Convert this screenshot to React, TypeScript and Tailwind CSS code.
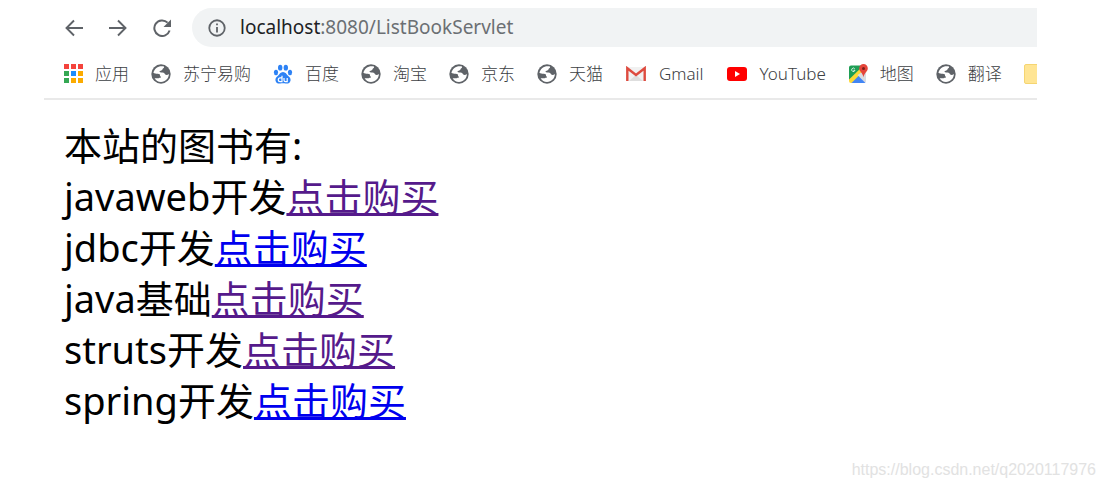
import { useState, type ReactNode } from "react";

interface Bookmark {
  label: string;
  icon: ReactNode;
}

interface Book {
  name: string;
  visited: boolean;
}

function BackIcon() {
  return (
    <svg viewBox="0 0 18 18" className="size-[18px]" fill="none" stroke="#5f6368" strokeWidth="1.9">
      <path d="M18 9H2M9 1.5 1.5 9 9 16.5" />
    </svg>
  );
}

function ForwardIcon() {
  return (
    <svg viewBox="0 0 18 18" className="size-[18px]" fill="none" stroke="#5f6368" strokeWidth="1.9">
      <path d="M0 9h16M9 1.5 16.5 9 9 16.5" />
    </svg>
  );
}

function ReloadIcon() {
  return (
    <svg viewBox="0 0 18 18" className="size-[18px]">
      <path d="M16.6 11.5A7.8 7.8 0 1 1 14.6 3.6" fill="none" stroke="#5f6368" strokeWidth="2" />
      <path d="M18 .5v7.500h-7.500z" fill="#5f6368" />
    </svg>
  );
}

function InfoIcon() {
  return (
    <svg viewBox="0 0 20 20" className="size-[18px] shrink-0">
      <circle cx="10" cy="10" r="8.6" fill="none" stroke="#5f6368" strokeWidth="2" />
      <path d="M9 9h2v6H9zM9 5h2v2H9z" fill="#5f6368" />
    </svg>
  );
}

function AppsIcon() {
  const dots = [
    "#f4433c", "#f4433c", "#f4433c",
    "#34a853", "#1a8cff", "#fbab00",
    "#34a853", "#fbab00", "#fbab00",
  ];
  return (
    <svg viewBox="0 0 19 19" className="size-[19px]">
      {dots.map((fill, i) => (
        <rect key={i} x={(i % 3) * 7} y={Math.floor(i / 3) * 7} width="5" height="5" fill={fill} />
      ))}
    </svg>
  );
}

function GlobeIcon() {
  return (
    <svg viewBox="0 0 20 20" className="size-5">
      <circle cx="10" cy="10" r="9.7" fill="#5f6368" />
      <path
        d="M13 2.6C8.5 1 3.4 4 2.400 8.800 3.500 9.600 5 9.800 6.800 9.800c2 0 2.200.7 2.200 1.700 0 .9.9.8.9 1.600 0 1-1.200 1.100-2.400 1.100H3.600c1.300 2.200 3.600 3.700 6.400 3.700 4.400 0 7.900-3.500 7.900-7.900-1 .9-2.600 1.400-3.600.6-.8-.7-.7-1.700-1.800-1.900-1.400-.3-3.700.3-4-.9-.3-1.400 2.500-.9 2.900-2.400.3-1 1.500-.9 1.600-1.800z"
        fill="#fff"
      />
    </svg>
  );
}

function BaiduIcon() {
  return (
    <svg viewBox="0 0 20 20" className="size-5">
      <g fill="#2d82f5">
        <ellipse cx="3" cy="8.5" rx="2.1" ry="2.7" />
        <ellipse cx="7.2" cy="3.7" rx="2.2" ry="2.9" />
        <ellipse cx="12.8" cy="3.7" rx="2.2" ry="2.9" />
        <ellipse cx="17" cy="8.5" rx="2.1" ry="2.7" />
        <path d="M10 8c2.6 0 3.4 2.3 5.3 4 1.6 1.4 2.6 2.7 2.2 4.7-.5 2.600-2.900 3-4.900 2.700-1.700-.2-3.500-.2-5.200 0-2 .3-4.400-.1-4.900-2.700-.4-2 .6-3.300 2.200-4.700C6.600 10.300 7.400 8 10 8z" />
      </g>
      <path
        d="M9 11.700v6H7.200a1.900 1.900 0 0 1 0-3.800H9M11 13.900v2.400c0 1 .5 1.400 1.400 1.400h1.800v-3.800"
        fill="none"
        stroke="#fff"
        strokeWidth="1.2"
      />
    </svg>
  );
}

function GmailIcon() {
  return (
    <svg viewBox="0 0 22 16" className="h-4 w-[22px]">
      <rect x="1" y="1" width="20" height="14" rx="1" fill="#f1f1f1" />
      <path d="M4 15l7-6 7 6z" fill="#dedede" />
      <path d="M2.3 15V2.2L11 9l8.700-6.800V15" fill="none" stroke="#de4b3f" strokeWidth="2.4" />
    </svg>
  );
}

function YouTubeIcon() {
  return (
    <svg viewBox="0 0 22 16" className="h-4 w-[22px]">
      <rect x="1" y="1" width="20" height="14" rx="3" fill="#f00" />
      <path d="M9 5v6l5-3z" fill="#fff" />
    </svg>
  );
}

function MapsIcon() {
  return (
    <svg viewBox="0 0 20 20" className="size-5">
      <path d="M1 3.5A2 2 0 0 1 3 1.5h13L1 17z" fill="#1e9e55" />
      <path d="M1 15.5 15 2l3.500 6L4 19H3a2 2 0 0 1-2-2z" fill="#fdd835" />
      <path d="M9.5 11 18 5.5V17a2 2 0 0 1-1 1.700z" fill="#dadce0" />
      <path d="M3.5 19l7-7 7 7z" fill="#4285f4" />
      <path d="M6.8 4.9a1.700 1.700 0 1 0 .2 1.400H5.400" fill="none" stroke="#fff" strokeWidth=".8" />
      <path d="M15.5 0a4.300 4.300 0 0 1 4.300 4.300c0 3.200-3.600 4.700-4.300 9-.7-4.300-4.300-5.800-4.300-9A4.300 4.300 0 0 1 15.500 0z" fill="#e5453a" />
      <circle cx="15.5" cy="4.5" r="1.5" fill="#7c1f1a" />
    </svg>
  );
}

const bookmarks: Bookmark[] = [
  { label: "应用", icon: <AppsIcon /> },
  { label: "苏宁易购", icon: <GlobeIcon /> },
  { label: "百度", icon: <BaiduIcon /> },
  { label: "淘宝", icon: <GlobeIcon /> },
  { label: "京东", icon: <GlobeIcon /> },
  { label: "天猫", icon: <GlobeIcon /> },
  { label: "Gmail", icon: <GmailIcon /> },
  { label: "YouTube", icon: <YouTubeIcon /> },
  { label: "地图", icon: <MapsIcon /> },
  { label: "翻译", icon: <GlobeIcon /> },
];

const books: Book[] = [
  { name: "javaweb开发", visited: true },
  { name: "jdbc开发", visited: false },
  { name: "java基础", visited: true },
  { name: "struts开发", visited: true },
  { name: "spring开发", visited: false },
];

function Toolbar() {
  const [path, setPath] = useState(":8080/ListBookServlet");

  return (
    <div className="flex items-center gap-[26px] pl-[21px]">
      <button type="button" aria-label="Back">
        <BackIcon />
      </button>
      <button type="button" aria-label="Forward">
        <ForwardIcon />
      </button>
      <button type="button" aria-label="Reload">
        <ReloadIcon />
      </button>
      <div className="-ml-[5px] flex h-[39px] min-w-0 flex-1 items-center rounded-l-full bg-[#f1f3f4] pl-4 text-[19px]">
        <InfoIcon />
        <label htmlFor="address" className="pl-[14px] text-[#202124]">
          localhost
        </label>
        <input
          id="address"
          value={path}
          onChange={(e) => setPath(e.target.value)}
          className="min-w-0 flex-1 bg-transparent text-[#6b6f73] outline-none"
        />
      </div>
    </div>
  );
}

function BookmarkBar() {
  return (
    <nav className="flex h-[53px] items-center gap-[22px] overflow-hidden border-b-2 border-[#e9e9e9] pt-0.5 pl-5 text-[17px] font-light text-[#3c4043]">
      {bookmarks.map(({ label, icon }) => (
        <a key={label} href="#" className="flex shrink-0 items-center gap-3">
          {icon}
          {label}
        </a>
      ))}
      <span className="h-5 w-5 shrink-0 rounded-xs border border-[#f5d572] bg-[#ffe594]" />
    </nav>
  );
}

export default function App() {
  return (
    <div className="flex min-h-screen flex-col bg-white font-['Noto_Sans','Noto_Sans_CJK_SC',sans-serif]">
      <header className="mr-[67px] ml-11 pt-2">
        <Toolbar />
        <BookmarkBar />
      </header>

      <main className="px-16 pt-5 text-[38px] leading-[51px] text-black">
        <p>本站的图书有:</p>
        <ul>
          {books.map(({ name, visited }) => (
            <li key={name}>
              {name}
              <a href="#" className={visited ? "text-[#551a8b] underline" : "text-[#0000ee] underline"}>
                点击购买
              </a>
            </li>
          ))}
        </ul>
      </main>

      <footer className="mt-auto px-2 pb-1.5 text-right font-['Liberation_Sans',sans-serif] text-base text-[#e2e2e2]">
        https://blog.csdn.net/q2020117976
      </footer>
    </div>
  );
}
